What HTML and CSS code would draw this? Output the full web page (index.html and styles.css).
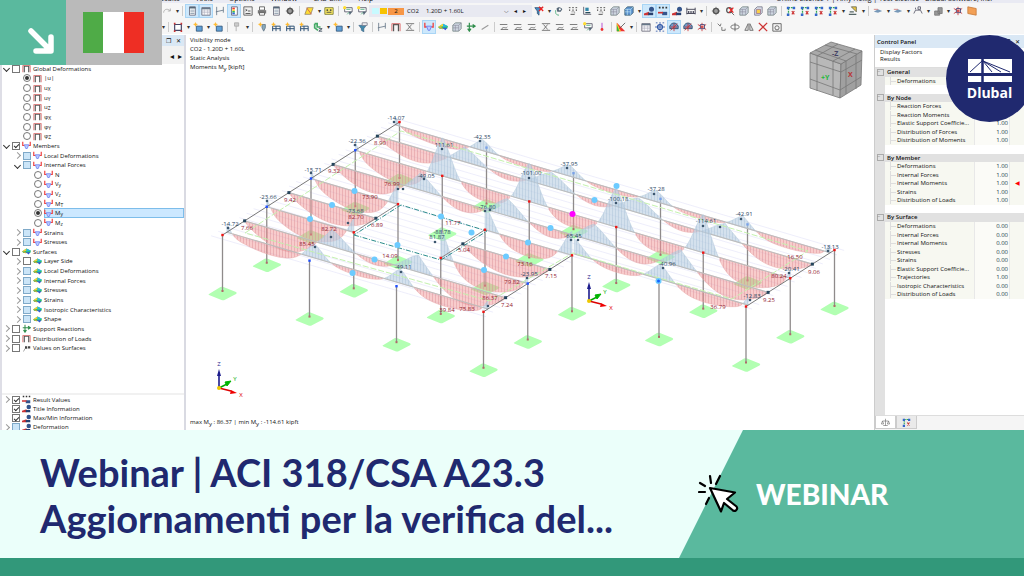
FILE: index.html
```html
<!DOCTYPE html>
<html lang="it">
<head>
<meta charset="utf-8">
<title>Webinar | ACI 318/CSA A23.3</title>
<link rel="stylesheet" href="styles.css">
</head>
<body>
<svg class="sprite" aria-hidden="true">
  <symbol id="redo" viewBox="0 0 12 12"><path d="M2 8C2 3 8 3 10 6M10 3v3H7" fill="none" stroke="#aaa"/></symbol>
  <symbol id="panel" viewBox="0 0 12 12"><path d="M3 1h7v10H3z" fill="#fff" stroke="#667"/><path d="M3 1h7v2H3z" fill="#567"/><path d="M4 5h5M4 7h5M4 9h5" stroke="#89a"/></symbol>
  <symbol id="grid" viewBox="0 0 12 12"><path d="M1 2h10v9H1z" fill="#fff" stroke="#667"/><path d="M1 2h10v2H1z" fill="#678"/><path d="M1 6h10M1 8h10M4 4v7M8 4v7" stroke="#aab" stroke-width=".7"/></symbol>
  <symbol id="section" viewBox="0 0 12 12"><path d="M2 1v10M10 1v7M1 7l9-2" fill="none" stroke="#678"/></symbol>
  <symbol id="rainbow" viewBox="0 0 12 12"><path d="M3 1h7v10H3z" fill="#fff" stroke="#667"/><path d="M4 2h3v2H4z" fill="#e33"/><path d="M4 4h3v2H4z" fill="#fc3"/><path d="M4 6h3v2H4z" fill="#3b5"/><path d="M4 8h3v2H4z" fill="#36d"/></symbol>
  <symbol id="console" viewBox="0 0 12 12"><path d="M1 1h10v10H1z" fill="#eee" stroke="#555"/><path d="M3 4l2 1-2 1M6 6h3M3 9h6" fill="none" stroke="#444"/></symbol>
  <symbol id="printer" viewBox="0 0 12 12"><path d="M3 1h6v4H3z" fill="#fff" stroke="#555"/><path d="M1 5h10v4H1z" fill="#777"/><path d="M3 8h6v3H3z" fill="#fff" stroke="#555"/></symbol>
  <symbol id="gear" viewBox="0 0 12 12"><circle cx="6" cy="6" r="3" fill="none" stroke="#555" stroke-width="2"/><path d="M6 1v10M1 6h10" stroke="#555" stroke-width=".8"/></symbol>
  <symbol id="load" viewBox="0 0 12 12"><path d="M4 2h7L8 10H1z" fill="#fd3" stroke="#986"/><path d="M3 2l6 8" stroke="#c55"/></symbol>
  <symbol id="calc" viewBox="0 0 12 12"><path d="M1 2h10v8H1z" fill="#fe6" stroke="#773"/><path d="M3 4h2v2H3zM7 4h2v2H7zM3 7h6v1H3z" fill="#554"/></symbol>
  <symbol id="note" viewBox="0 0 12 12"><path d="M2 2h9v5H2z" fill="#fff" stroke="#556"/><path d="M4 4h5M5 10l3-3" stroke="#4a7"/><circle cx="2" cy="2" r="2" fill="#fd3"/><path d="M7 7l4 0-3 4z" fill="#567"/></symbol>
  <symbol id="filterx" viewBox="0 0 12 12"><path d="M1 2h8L6 6v5L4 9V6z" fill="#478dc8" stroke="#357"/><path d="M6 1l5 5M11 1L6 6" stroke="#e22" stroke-width="1.6"/></symbol>
  <symbol id="filter" viewBox="0 0 12 12"><path d="M1 4h9L7 8v4L4 10V8z" fill="#48a" stroke="#357" stroke-width=".6"/><path d="M5 1h6v3H5z" fill="#fff" stroke="#778"/></symbol>
  <symbol id="eye" viewBox="0 0 12 12"><path d="M3 3c3-3 6-1 7 1L8 7H4z" fill="#567"/><circle cx="7" cy="4" r="1.3" fill="#fff"/><path d="M2 5v3c0 2 2 3 4 3" fill="none" stroke="#4a7"/></symbol>
  <symbol id="values" viewBox="0 0 12 12"><path d="M1 2h2M5 2h2M9 2h2M2 4v2M6 4v2M10 4v2M3 10h5" stroke="#555" stroke-width="1.2"/><path d="M4 7h4v2" fill="none" stroke="#999"/></symbol>
  <symbol id="flagvalues" viewBox="0 0 12 12"><path d="M2 10l2-4h3" fill="none" stroke="#888"/><path d="M4 3h3v3H4zM8 3h3v3H8z" fill="#444"/></symbol>
  <symbol id="support" viewBox="0 0 12 12"><path d="M2 1v9h9" fill="none" stroke="#556"/><path d="M4 2h4v4H4z" fill="#38a"/><path d="M4 8h6" stroke="#245" stroke-width="1.5"/></symbol>
  <symbol id="cube" viewBox="0 0 12 12"><path d="M1 4l3-3h7v7l-3 3H1z" fill="#cdd5e0" stroke="#788"/><path d="M1 4h7v7M8 4l3-3M4 4v7M1 7h7" fill="none" stroke="#889" stroke-width=".7"/></symbol>
  <symbol id="bluecube" viewBox="0 0 12 12"><path d="M1 4l3-3h7v7l-3 3H1z" fill="#5b91cf" stroke="#467"/><path d="M1 4h7v7M8 4l3-3M4 4v7M1 7h7" fill="none" stroke="#dff" stroke-width=".6"/></symbol>
  <symbol id="yellowcube" viewBox="0 0 12 12"><path d="M2 4l3-3h6v7l-3 3H2z" fill="#dde3f0" stroke="#778"/><path d="M4 4h5v5H4z" fill="#f8cf4a" stroke="#979"/></symbol>
  <symbol id="result" viewBox="0 0 12 12"><path d="M0 9l6-2v4H0z" fill="#c33"/><path d="M5 8h6v3H5z" fill="#27406f"/><circle cx="9" cy="4" r="3" fill="#35558c"/></symbol>
  <symbol id="resultv" viewBox="0 0 12 12"><path d="M1 2h2M5 2h2M9 2h2" stroke="#333" stroke-width="2"/><path d="M5 7h6v4H5z" fill="#35558c"/><path d="M0 8h6" stroke="#c33" stroke-width="2"/></symbol>
  <symbol id="ruler" viewBox="0 0 12 12"><path d="M1 2v8M11 2v8M1 4h10M1 9h10M3 6v3M5 6v3M7 6v3M9 6v3" stroke="#445" stroke-width="1.1"/></symbol>
  <symbol id="zoomx" viewBox="0 0 12 12"><circle cx="5" cy="5" r="3" fill="none" stroke="#555" stroke-width="1.5"/><path d="M7 7l4 4" stroke="#555"/><path d="M5 2l5 6M10 2L5 8" stroke="#e22" stroke-width="1.5"/></symbol>
  <symbol id="axis" viewBox="0 0 12 12"><path d="M3 11V2h7" fill="none" stroke="#3a5" stroke-width="1.5" stroke-dasharray="2 1"/><path d="M1 1h3v3H1zM1 9h3v3H1zM8 1h3v3H8z" fill="#36c"/><path d="M7 6l3 4M10 6l-3 4" stroke="#c33" stroke-width="1.4"/></symbol>
  <symbol id="plane" viewBox="0 0 12 12"><path d="M4 1h6v6z" fill="#edc93f" stroke="#665"/><path d="M1 10h9M2 7h5" stroke="#566" stroke-width="1.5"/></symbol>
  <symbol id="beam" viewBox="0 0 12 12"><path d="M1 7l5-3 5 2-5 2z" fill="#7798b8"/><path d="M1 4h5" stroke="#c77"/></symbol>
  <symbol id="dim" viewBox="0 0 12 12"><path d="M1 9l2-4h6l2 4M3 2v2M6 1v3h3V1z" fill="none" stroke="#556"/></symbol>
  <symbol id="blocks" viewBox="0 0 12 12"><path d="M2 6h6v5H2zM6 2h5v7H6z" fill="#999" stroke="#777"/></symbol>
  <symbol id="burst" viewBox="0 0 12 12"><path d="M1 3l10 6M11 3L1 9M6 1v10" stroke="#c33"/><path d="M4 3h5v5H4z" fill="none" stroke="#447"/></symbol>
  <symbol id="orange" viewBox="0 0 12 12"><path d="M1 1l10 2v8L1 9z" fill="#f3a056" stroke="#c97c3c"/></symbol>
  <symbol id="rect" viewBox="0 0 12 12"><path d="M2 3h8v7H2z" fill="#fff" stroke="#446" stroke-width="1.4"/><path d="M1 2h2M9 2h2M1 11h2M9 11h2" stroke="#c33" stroke-width="2"/></symbol>
  <symbol id="star" viewBox="0 0 12 12"><path d="M4 5h7v6H4z" fill="#5fa0d8" stroke="#357"/><path d="M3 0l1 2 2 .5L4 4 3 6 2 4 0 2.5 2 2z" fill="#fb3"/></symbol>
  <symbol id="axisstar" viewBox="0 0 12 12"><path d="M2 11V5h9v6M2 8h9M6 5v6" fill="none" stroke="#357" stroke-width="1.2"/><path d="M3 0l1 2 2 .5L4 4 3 6 2 4 0 2.5 2 2z" fill="#fb3"/></symbol>
  <symbol id="lampstar" viewBox="0 0 12 12"><path d="M6 3h4v4L8 11 6 7z" fill="#8ab" stroke="#678"/><path d="M4 0l1 2 2 .5L5 4 4 6 3 4 1 2.500 3 2z" fill="#fb3"/></symbol>
  <symbol id="pin" viewBox="0 0 12 12"><path d="M3 1h5v4H3zM5 5v6" fill="#ccc" stroke="#aaa"/></symbol>
  <symbol id="green" viewBox="0 0 12 12"><path d="M2 2h3v4h4M2 2v5l4 3" fill="none" stroke="#4a6" stroke-width="2"/><path d="M7 8h4l-4 3h4" fill="none" stroke="#345"/></symbol>
  <symbol id="frame" viewBox="0 0 12 12"><path d="M3 11V3h6v8" fill="none" stroke="#555" stroke-width="1.6"/><path d="M1 11V2h10v9" fill="none" stroke="#d66"/></symbol>
  <symbol id="moment" viewBox="0 0 12 12"><path d="M1 1v5h2M11 1v5H9" fill="none" stroke="#e44" stroke-width="1.6"/><path d="M3 5h6l-2 5H5z" fill="#bcf" stroke="#67e"/></symbol>
  <symbol id="surface" viewBox="0 0 12 12"><path d="M0 6l6-4 6 3-1 3H2z" fill="#2fc36b"/><path d="M0 6l6-4v3z" fill="#ffd52e"/><path d="M6 2l6 3-6 1z" fill="#29b6e8"/><path d="M5 7h6l-2 3z" fill="#3858d8"/><path d="M0 6h4l2 3z" fill="#e9a42e"/></symbol>
  <symbol id="react" viewBox="0 0 12 12"><path d="M4 1v10M2 8l2 3 2-3M1 5h10M8 3l3 2-3 2" fill="none" stroke="#2f8d4b" stroke-width="1.4"/></symbol>
  <symbol id="line" viewBox="0 0 12 12"><path d="M2 9l8-5" stroke="#999" stroke-width="1.3"/></symbol>
  <symbol id="diag" viewBox="0 0 12 12"><path d="M1 3h9M2 9h9M3 9c2-5 5 0 7-3" fill="none" stroke="#666"/></symbol>
  <symbol id="diagx" viewBox="0 0 12 12"><path d="M1 2h10M1 10h10M3 3l5 6M8 3L3 9" stroke="#666" fill="none"/></symbol>
  <symbol id="drop" viewBox="0 0 12 12"><path d="M6 1v8" stroke="#a3c"/><circle cx="6" cy="9" r="1.7" fill="#e33"/></symbol>
  <symbol id="chart" viewBox="0 0 12 12"><path d="M1 1v10h10z" fill="#e33"/><path d="M1 1l5 10H1z" fill="#fc2"/><path d="M1 3l3 8H1z" fill="#3b4"/><path d="M4 8l7-7" stroke="#555"/></symbol>
  <symbol id="target" viewBox="0 0 12 12"><circle cx="6" cy="6" r="3" fill="none" stroke="#335aa8" stroke-width="1.5"/><path d="M1 1h2M9 1h2M1 11h2M9 11h2M6 0v12M0 6h12" stroke="#335aa8"/></symbol>
  <symbol id="globe" viewBox="0 0 12 12"><path d="M1 5c2-5 8-5 10 0v3H1z" fill="#6f9dcc" stroke="#246"/><path d="M2 10l8-8M6 2v9M2 6h8" stroke="#c33"/></symbol>
  <symbol id="path" viewBox="0 0 12 12"><path d="M2 2l3 3 1-3M7 6v4h4V8" fill="none" stroke="#666"/></symbol>
  <symbol id="rotate" viewBox="0 0 12 12"><ellipse cx="6" cy="6" rx="5" ry="2.5" fill="none" stroke="#666"/><path d="M6 1v10" stroke="#555"/></symbol>
  <symbol id="mirror" viewBox="0 0 12 12"><path d="M5 2L1 10h4zM7 2l4 8H7z" fill="#ddd" stroke="#666"/></symbol>
  <symbol id="cross" viewBox="0 0 12 12"><path d="M1 1l10 10M11 1L1 11" stroke="#c33" stroke-width="1.5"/></symbol>
  <symbol id="camera" viewBox="0 0 12 12"><path d="M1 2h10v9H1z" fill="none" stroke="#555"/><circle cx="6" cy="7" r="2.5" fill="none" stroke="#555"/></symbol>
  <symbol id="scale" viewBox="0 0 12 12"><path d="M6 1v9M3 10h6M2 4h8M2 4L.5 8h3zM10 4L8.5 8h3z" fill="none" stroke="#666" stroke-width=".8"/></symbol>
  <symbol id="pad" viewBox="-15 -6 30 15"><path d="M-13.5 2-2-5Q-1-5.5 1-5L13.5 0Q15 1 13.5 2L2 8Q1 8.5-1 8L-13.5 3Q-14.5 2-13.5 2Z" fill="#b2ffb2"/></symbol>
  <pattern id="hatch-red" width="3" height="3" patternUnits="userSpaceOnUse"><rect width="3" height="3" fill="#f08f8f" fill-opacity=".46"/><path d="M.5 0v3" stroke="#d98a90" stroke-opacity=".6" stroke-width=".7"/></pattern>
  <pattern id="hatch-blue" width="3" height="3" patternUnits="userSpaceOnUse"><rect width="3" height="3" fill="#b9cfe2" fill-opacity=".62"/><path d="M.5 0v3" stroke="#9db9d0" stroke-opacity=".5" stroke-width=".7"/></pattern>
</svg>

<main class="app">
  <header class="chrome">
    <nav class="menu"><span>Results</span><span>Tools</span><span>Options</span><span>Window</span><span>CAD-BIM</span><span>Help</span><span class="license">Online License 1 | Amy Heilig | Test-License - Dlubal Software, Inc.</span></nav>
    <div class="toolbar" id="toolbar-main"></div>
    <div class="toolbar" id="toolbar-view"></div>
  </header>
  <div class="work">
    <aside class="navigator" aria-label="Navigator">
      <div class="dock-title"><button aria-label="Float">❐</button><button aria-label="Close">✕</button></div>
      <div class="dock-tabs"><button aria-label="Previous">◂</button><button aria-label="Next">▸</button></div>
      <div class="tree" id="tree"></div>
      <div class="tree tree-options" id="tree-options"></div>
    </aside>

    <section class="viewport">
      <p class="info">Visibility mode<br>CO2 - 1.20D + 1.60L<br>Static Analysis<br>Moments M<sub>y</sub> [kipft]</p>
      <svg class="model" viewBox="186 35 688 395" preserveAspectRatio="xMinYMin meet" role="img" aria-label="Bending moments of the slab beams">
        <g id="structure"></g>
        <g id="labels"></g>
        <g class="view-cube" stroke="#777" stroke-width=".8" stroke-linejoin="round">
          <path d="M810 88V53l31 11-1 34z" fill="#b8b8b8"/><path d="M841 64l21-13-1 34-21 13z" fill="#a0a0a0"/><path d="M810 53l21-11 31 9-21 13z" fill="#a9a9a9"/>
          <path d="M817 56v35M833 61v34M810 62l31 10M810 79l30 11M846 61v33M856 55v34M841 72l21-12M840 90l21-13M815 50l31 11M825 45l32 9M817 56l21-12M833 61l22-12" fill="none"/>
          <g stroke="none" class="cube-text"><text x="821" y="80" fill="#22b83a">+Y</text><text x="848" y="77" fill="#b83333">X</text><text x="832" y="56" fill="#446">-Z</text></g>
        </g>
        <g id="triad">
          <path d="M219 388V375" stroke="#1c1c8c" stroke-width="1.6"/><path d="M219 369l-2 7h4z" fill="#1c1c8c"/>
          <path d="M219 388l8-4" stroke="#0a0" stroke-width="1.4"/><path d="M231 381l-6 1 2 4z" fill="#00b400" stroke="#00b400"/>
          <path d="M219 388l12 3" stroke="#d00" stroke-width="1.4"/><path d="M237 393l-6-3-1 4z" fill="#e00"/>
          <circle cx="219" cy="388" r="2" fill="#eec800"/>
          <text x="219" y="366" fill="#1c1c8c">Z</text><text x="235" y="381" fill="#0a0">Y</text><text x="241" y="397" fill="#d00">X</text>
        </g>
        <use href="#triad" x="370" y="-87"/>
      </svg>
      <p class="extremes">max M<sub>y</sub> : 86.37 | min M<sub>y</sub> : -114.61 kipft</p>
    </section>

    <aside class="control">
      <div class="dock-title"><h2>Control Panel</h2><button aria-label="Float">❐</button><button aria-label="Close">✕</button></div>
      <p class="control-head">Display Factors<br>Results</p>
      <table class="factors"><tbody id="factors"></tbody></table>
      <div class="control-tabs"><button class="active" aria-label="Factors"><svg><use href="#scale"/></svg></button><button aria-label="Filter"><svg><use href="#axis"/></svg></button></div>
    </aside>
  </div>

  <div class="badge">
    <div class="badge-arrow"><svg viewBox="0 0 66 65" aria-hidden="true"><path d="M31 31L50 50M51 37v14H36" fill="none" stroke="#fff" stroke-width="5.5" stroke-linecap="round" stroke-linejoin="round"/></svg></div>
    <div class="badge-flag"><div class="flag" role="img" aria-label="Italia"></div></div>
  </div>
  <div class="logo">
    <svg viewBox="0 0 44 23" aria-hidden="true"><path d="M0 0h44v14H0zM0 17h44v6H0z" fill="#fff"/><path d="M14.500 0v23" stroke="#20296f" stroke-width="2.500"/><path d="M2 13L14 2M15 2l27 11M15 2l18 11M15 2l9 11" stroke="#20296f" fill="none"/></svg>
    <span>Dlubal</span>
  </div>
</main>

<section class="banner">
  <h1>Webinar | ACI 318/CSA A23.3<br>Aggiornamenti per la verifica del...</h1>
  <div class="category">
    <svg viewBox="0 0 42 40" aria-hidden="true"><g stroke="#000" stroke-width="2.2" stroke-linecap="round" stroke-linejoin="round"><path d="M12 2l1 7M22 2l-4 8M2 9l5 3M1 18h6M11 24l-3 6" fill="none"/><path d="M12 14l25 4.500-8 6.500 9.500 7.500c2 3-2 6-4 3.500L26 29l-3 8.500z" fill="#fff"/></g></svg>
    <strong>WEBINAR</strong>
  </div>
</section>
<footer class="strip"></footer>
<script src="app.js"></script>
</body>
</html>
```

FILE: styles.css
```css
* { box-sizing: border-box; }
body {
  margin: 0;
  min-height: 100vh;
  display: flex;
  flex-direction: column;
  font-family: "Open Sans", "Noto Sans", sans-serif;
  font-size: 6px;
  color: #111;
  background: #fff;
}
p, h1, h2 { margin: 0; font-weight: inherit; }
button, input { font: inherit; color: inherit; margin: 0; padding: 0; border: 0; background: none; }
.sprite { position: absolute; width: 0; height: 0; }

.app {
  position: relative;
  flex: 1 0 0;
  min-height: 430px;
  display: flex;
  flex-direction: column;
  overflow: hidden;
}
.chrome { height: 34px; background: #f6f6f6; overflow: hidden; flex: none; }
.menu { display: flex; gap: 16px; height: 3px; padding-left: 156px; background: #e9eaf3; line-height: 3px; font-size: 7px; align-items: flex-end; }
.menu span { height: 6px; white-space: nowrap; }
.menu .license { margin-left: auto; padding-right: 32px; }
.toolbar { display: flex; align-items: center; height: 16px; padding-left: 160px; }
.toolbar + .toolbar { height: 15px; }
.tool { width: 14px; height: 14px; flex: none; display: grid; place-items: center; }
.tool svg { width: 10px; height: 10px; display: block; }
.tool.on { background: #cde8fc; box-shadow: inset 0 0 0 1px #a9d5f5; }
.caret { width: 6px; flex: none; text-align: center; font-size: 6px; color: #333; }
.sep { width: 1px; height: 10px; margin: 0 2px; flex: none; background: #ccc; }
.combo { display: flex; align-items: center; gap: 3px; width: 163px; height: 12px; padding: 0 5px 0 3px; background: #e8e9f1; }
.combo i { width: 7px; height: 6px; background: #c8faff; }
.combo i + i { background: #f7c200; margin-left: -2px; }
.combo b { width: 16px; height: 7px; line-height: 7px; text-align: center; background: #f79646; font-weight: 400; margin-left: -2px; }
.combo span:last-of-type { margin-left: 4px; margin-right: auto; }
.combo button { width: 6px; }

.work { flex: 1; min-height: 0; display: flex; border-top: 1px solid #fff; }
.navigator { width: 186px; flex: none; display: flex; flex-direction: column; border-left: 2px solid #dedee6; border-right: 2px solid #d9dae2; }
.dock-title { display: flex; align-items: center; justify-content: flex-end; gap: 5px; height: 11px; padding-right: 3px; background: #dae8f5; flex: none; }
.dock-tabs { height: 18px; flex: none; display: flex; justify-content: flex-end; align-items: center; gap: 4px; padding-right: 2px; background: #f2f2f2; font-size: 8px; }
.tree { height: 289px; flex: none; display: grid; grid-auto-rows: minmax(0, 1fr); }
.tree-options { margin-top: 40px; height: 39px; border-top: 2px solid #f1f1f1; }
.row { display: flex; align-items: center; gap: 2px; line-height: 8px; white-space: nowrap; }
.row.l1 { padding-left: 11px; }
.row.l2 { padding-left: 22px; }
.row .twist { width: 8px; height: 8px; flex: none; display: grid; place-items: center; }
.twist::before { content: ""; width: 4px; height: 4px; border: solid #999; border-width: 1px 1px 0 0; transform: rotate(45deg); }
.twist.open::before { border-color: #333; transform: rotate(135deg); }
.twist.none::before { display: none; }
.row input { appearance: none; width: 8px; height: 8px; flex: none; border: 1px solid #777; background: #fff; display: grid; place-items: center; }
.row input.part { background: #cbe5f8; border-color: #7fa9c8; }
.row input[type="radio"] { border-radius: 50%; }
.row input[type="radio"]:checked::before { content: ""; width: 4px; height: 4px; border-radius: 50%; background: #333; }
.row input[type="checkbox"]:checked::before { content: ""; width: 4px; height: 2px; border: solid #333; border-width: 0 0 1px 1px; transform: rotate(-45deg); }
.row label { flex: 1; display: flex; align-items: center; gap: 2px; height: 100%; }
.row label svg { width: 9px; height: 9px; flex: none; }
.row sub { font-size: 5px; line-height: 5px; vertical-align: -1px; }
.row.selected label { background: #cce8ff; box-shadow: inset 0 0 0 1px #7dbdea; }

.viewport { position: relative; flex: 1; min-width: 0; overflow: hidden; }
.info { position: absolute; left: 4px; top: 1px; line-height: 9px; z-index: 1; }
.extremes { position: absolute; left: 4px; top: 382px; line-height: 10px; }
.info sub, .extremes sub { line-height: 0; font-size: 6px; }
.model { position: absolute; left: 0; top: 0; width: 688px; height: 395px; }
.model text { font-size: 6px; text-anchor: middle; }
.neg { fill: #2b4662; }
.pos { fill: #932230; }
.model .cube-text text { font-size: 7px; font-weight: 700; text-anchor: start; }

.control { width: 150px; flex: none; display: flex; flex-direction: column; border-left: 1px solid #ccc; }
.control .dock-title { height: 13px; padding: 0 4px 0 2px; }
.control h2 { font-size: 6px; font-weight: 600; margin-right: auto; }
.control-head { padding: 1px 0 0 5px; height: 20px; line-height: 7px; flex: none; border-bottom: 1px solid #ddd; }
.factors { display: block; background: linear-gradient(90deg, #e1e1e1 10px, #fff 10px); flex: 1; }
.factors tbody { display: grid; grid-auto-rows: minmax(0, 1fr); height: 231px; }
.factors tr { display: grid; grid-template-columns: 10px minmax(0, 1fr) 36px 14px; line-height: 8px; }
.factors td, .factors th { padding: 0; font-weight: 400; text-align: left; white-space: nowrap; }
.factors .item th { padding-left: 12px; background: #f7f8f1; }
.factors .item th::before { content: ""; display: inline-block; width: 6px; height: 8px; margin: 0 1px 0 -7px; vertical-align: top; background: linear-gradient(#ddd, #ddd) 0 4px / 6px 1px no-repeat, linear-gradient(#ddd, #ddd) 0 0 / 1px 8px no-repeat; }
.factors .value { text-align: right; padding-right: 1px; border-left: 1px solid #e8e8e8; border-right: 1px solid #e8e8e8; background: #fbfbf7; color: #223b4a; }
.factors .flag-cell { background: #f7f8f1; color: #f00; text-align: center; }
.factors .group { background: #e1e1e1; }
.factors .group th { font-weight: 600; padding-left: 2px; }
.factors .group td { display: grid; place-items: center; }
.factors .group td::before { content: "−"; width: 5px; height: 5px; line-height: 3px; font-size: 5px; border: 1px solid #aaa; color: #777; }
.control-tabs { height: 15px; flex: none; display: flex; background: #f5f5f5; border-top: 1px solid #ddd; }
.control-tabs button { width: 21px; height: 13px; display: grid; place-items: center; background: #eaeaea; border: 1px solid #ccc; border-top: 0; }
.control-tabs button.active { background: #fff; }
.control-tabs svg { width: 9px; height: 9px; }

.badge { position: absolute; left: 0; top: 0; display: flex; height: 65px; }
.badge-arrow { width: 66px; background: #5ab99e; }
.badge-arrow svg { display: block; width: 66px; height: 65px; }
.badge-flag { width: 96px; background: #bababa; padding: 12px 18px 12px 17px; }
.flag { height: 41px; background: linear-gradient(90deg, #4fab47 0 33%, #fff 33% 67%, #ee2e24 67%); }
.logo { position: absolute; right: -9px; top: 35px; width: 87px; height: 87px; border-radius: 50%; background: #20296f; color: #fff; display: flex; flex-direction: column; align-items: center; padding-top: 24px; font-size: 14px; line-height: 22px; font-weight: 700; }
.logo svg { width: 44px; height: 23px; flex: none; }

.banner { display: flex; align-items: stretch; background: #ebfffa; font-family: Lato, "Open Sans", sans-serif; }
.banner h1 { flex: 1; padding: 19px 0 17px 40px; font-size: 38px; line-height: 46px; font-weight: 700; color: #20296f; white-space: nowrap; }
.category { position: relative; width: 345px; flex: none; display: flex; align-items: center; gap: 16px; padding: 0 0 1px 19px; color: #fff; }
.category::before { content: ""; position: absolute; inset: 0; background: #5ab99e; clip-path: polygon(64px 0, 100% 0, 100% 100%, 0 100%); }
.category svg { position: relative; width: 42px; height: 40px; }
.category strong { position: relative; font-size: 28px; font-weight: 900; }
.strip { height: 18px; background: #32987a; }
```

FILE: app.js
```js
const byId = id => document.getElementById(id);

/* Toolbars: "v" is a drop-down caret, "|" a separator, "*" marks an active tool. */
const combo = '<div class="combo"><i></i><i></i><b>2</b><span>CO2</span><span>1.20D + 1.60L</span><button aria-label="Open list">⌵</button><button aria-label="Previous case">◂</button><button aria-label="Next case">▸</button></div>';
const tools = {
  'toolbar-main': 'redo v | *panel *grid section *rainbow console printer panel gear | load v calc | note note combo filterx v eye values support values cube bluecube v *result *resultv result ruler v | gear zoomx cube yellowcube cube | axis axis axis axis v plane v | beam v beam v dim v blocks v burst orange',
  'toolbar-view': 'v | rect v star v star | pin v | lampstar axisstar axisstar axisstar green v star v | filter | section frame diagx | *moment surface cube react line | diag diag diag diagx diag diag note drop | chart v | grid target *globe globe burst | path rotate mirror cross camera'
};
for (const [id, list] of Object.entries(tools)) {
  byId(id).innerHTML = list.split(' ').map(t => {
    if (t === 'v') return '<span class="caret">▾</span>';
    if (t === '|') return '<span class="sep"></span>';
    if (t === 'combo') return combo;
    const name = t.replace('*', '');
    return `<button class="tool${t[0] === '*' ? ' on' : ''}" aria-label="${name}"><svg><use href="#${name}"/></svg></button>`;
  }).join('');
}

/* Navigator rows: level, twist, control, icon, label. */
const surfaceRows = ['Local Deformations', 'Internal Forces', 'Stresses', 'Strains', 'Isotropic Characteristics', 'Shape'];
const rows = [
  [0, 'open', 'off', 'frame', 'Global Deformations'],
  ...['|u|', 'u<sub>X</sub>', 'u<sub>Y</sub>', 'u<sub>Z</sub>', 'φ<sub>X</sub>', 'φ<sub>Y</sub>', 'φ<sub>Z</sub>'].map((n, i) => [1, 'none', i ? 'radio' : 'radio-on', 'frame', n, 'deformation']),
  [0, 'open', 'on', 'moment', 'Members'],
  [1, 'shut', 'part', 'moment', 'Local Deformations'],
  [1, 'open', 'part', 'moment', 'Internal Forces'],
  ...['N', 'V<sub>y</sub>', 'V<sub>z</sub>', 'M<sub>T</sub>', 'M<sub>y</sub>', 'M<sub>z</sub>'].map((n, i) => [2, 'none', i === 4 ? 'radio-on' : 'radio', 'moment', n, 'force']),
  [1, 'shut', 'part', 'moment', 'Strains'],
  [1, 'shut', 'part', 'moment', 'Stresses'],
  [0, 'open', 'off', 'surface', 'Surfaces'],
  [1, 'shut', 'off', 'surface', 'Layer Side'],
  ...surfaceRows.map(n => [1, 'shut', 'part', 'surface', n]),
  [0, 'shut', 'off', 'react', 'Support Reactions'],
  [0, 'shut', 'off', 'frame', 'Distribution of Loads'],
  [0, 'shut', 'off', 'flagvalues', 'Values on Surfaces']
];
const options = [
  [0, 'shut', 'on', 'resultv', 'Result Values'],
  [0, 'none', 'on', 'result', 'Title Information'],
  [0, 'none', 'on', 'result', 'Max/Min Information'],
  [0, 'shut', 'part', 'result', 'Deformation']
];
const renderRows = (list, prefix) => list.map(([level, twist, state, icon, label, group], i) => {
  const radio = state.startsWith('radio');
  const checked = state === 'on' || state === 'radio-on' ? ' checked' : '';
  const selected = group === 'force' && checked ? ' selected' : '';
  return `<div class="row l${level}${selected}"><span class="twist ${twist}"></span><input id="${prefix}${i}" type="${radio ? 'radio' : 'checkbox'}" class="${state}"${group ? ` name="${group}"` : ''}${checked}><label for="${prefix}${i}"><svg><use href="#${icon}"/></svg><span>${label}</span></label></div>`;
}).join('');
byId('tree').innerHTML = renderRows(rows, 'nav');
byId('tree-options').innerHTML = renderRows(options, 'opt');

/* Control panel factors. */
const groups = [
  ['General', '', ['Deformations']],
  ['By Node', '1.00', ['Reaction Forces', 'Reaction Moments', 'Elastic Support Coefficie...', 'Distribution of Forces', 'Distribution of Moments']],
  ['By Member', '1.00', ['Deformations', 'Internal Forces', 'Internal Moments', 'Strains', 'Distribution of Loads']],
  ['By Surface', '0.00', ['Deformations', 'Internal Forces', 'Internal Moments', 'Stresses', 'Strains', 'Elastic Support Coefficie...', 'Trajectories', 'Isotropic Characteristics', 'Distribution of Loads']]
];
byId('factors').innerHTML = groups.map(([title, value, items]) =>
  `<tr class="group"><td></td><th>${title}</th></tr>` + items.map(n =>
    `<tr class="item"><td></td><th>${n}</th><td class="value">${n === 'Trajectories' ? '1.00' : value}</td><td class="flag-cell">${title === 'By Member' && n === 'Internal Moments' ? '◀' : ''}</td></tr>`).join('')
).join('<tr><td></td></tr>');

/* Structure: bay i along X, axis j along Y, projected to the view. */
const P = (i, j) => [222.5 + 87 * i + 44.25 * j, 235 + 25.6 * i - 28.25 * j];
const at = (i, j) => P(i, j).map(v => v.toFixed(1)).join(' ');
const line = (a, b, cls, w = 1, extra = '') => `<path d="M${a}L${b}" fill="none" stroke="${cls}" stroke-width="${w}" ${extra}/>`;
const baysAt = j => (j < 2 ? 3 : 5);
let out = '';

for (let j = 0; j <= 4.2; j += 0.16) out += line(at(-0.08, j - 0.1), at(baysAt(j) + 0.08, j - 0.1), '#e2e2f8', 0.6);

const columns = [];
for (let j = 4; j >= 0; j--) for (let i = 0; i <= baysAt(j); i++) columns.push([i, j]);
columns.forEach(([i, j]) => {
  const [x, y] = P(i, j);
  out += `<use href="#pad" x="${x - 15}" y="${y + 51}" width="30" height="15"/>`;
});
columns.forEach(([i, j]) => {
  const [x, y] = P(i, j);
  out += line(`${x} ${y}`, `${x} ${y + 56}`, '#8f8b8b', 1.3) + `<rect x="${x - 1}" y="${y + 55}" width="2" height="2" fill="#b06a6a"/>`;
});

/* Beams: axis, first bay, last bay, end sag, inner sag, support peak, peak width. */
const beams = [
  [3.9, 0, 5, 8, 4, 11, 0.15], [3.5, 0, 5, 15, 8, 15, 0.3], [3, 0, 5, 20, 13, 38, 0.16], [2.5, 0, 5, 18, 12, 17, 0.3],
  [2, 0, 1, 19, 9, 20, 0.13], [2, 2, 3, 18, 14, 24, 0.14], [2.05, 3, 5, 10, 6, 15, 0.17],
  [1.5, 0, 1, 18, 10, 0, 0.2], [1.5, 2, 3, 18, 14, 0, 0.2], [1, 0, 1, 20, 12, 14, 0.1], [1, 2, 3, 19, 14, 30, 0.14],
  [0.5, 0, 3, 19, 8, 17, 0.28], [0.1, 0, 3, 10, 5, 14, 0.15]
];
beams.forEach(([j, from, to, endSag, sag, peak, width]) => {
  const runs = [];
  for (let n = 0; n <= (to - from) * 58; n++) {
    const s = from + n / 58;
    const bay = Math.min(Math.floor(s), to - 1);
    const outer = bay === 0 || bay === baysAt(j) - 1;
    let m = (outer ? endSag : sag) * Math.pow(Math.max(0, Math.sin(Math.PI * (s - bay))), outer ? 0.75 : 1);
    for (let k = 0; k <= baysAt(j); k++) {
      const edge = k === 0 || k === baysAt(j);
      const h = edge ? (j % 1 === 0.5 ? 0 : 8) : peak;
      m -= h * Math.exp(-Math.pow(Math.abs(s - k) / (edge ? 0.06 : width), 1.7));
    }
    const sign = m >= 0;
    if (!runs.length || runs[runs.length - 1].sign !== sign) runs.push({ sign, pts: [] });
    runs[runs.length - 1].pts.push([s, m]);
  }
  runs.forEach(({ sign, pts }) => {
    const axis = pts.map(([s]) => at(s, j));
    const curve = pts.map(([s, m]) => { const [x, y] = P(s, j); return `${x.toFixed(1)} ${(y + m).toFixed(1)}`; }).reverse();
    out += `<path d="M${axis[0]}L${axis[axis.length - 1]}L${curve.join('L')}Z" fill="url(#hatch-${sign ? 'red' : 'blue'})" stroke="${sign ? '#e9a9a9' : '#b3c8da'}" stroke-width=".5"/>`;
  });
  out += line(at(from, j), at(to, j), '#bdbdbd', 1.1);
});

out += line(at(0, 0), at(0, 4), '#777') + line(at(3, 0), at(3, 2), '#777') + line(at(5, 2), at(5, 4), '#777');
out += line(at(1, 1), at(1, 2), '#888') + line(at(2, 1), at(2, 2), '#888');
out += '<path d="M354 235L441 260L487 231L401 205Z" fill="none" stroke="#2b8c8c" stroke-dasharray="5 1.5 1 1.5"/>';
out += '<path d="M245 233L401 131L808 251L732 299L573 253L490 301Z" fill="none" stroke="#c4f2ae" stroke-dasharray="6 2"/>';

const blueTops = ['0,1', '0,2', '0,3', '1,0', '2,0', '3,1', '4,2', '1,4', '2,4', '3,4', '4,4'];
columns.forEach(([i, j]) => {
  const [x, y] = P(i, j);
  const blue = blueTops.includes(`${i},${j}`);
  out += `<rect x="${x - 1.2}" y="${y - 1.2}" width="2.4" height="2.4" fill="${blue ? (j === 4 ? '#7aa2e8' : '#1f4fff') : '#f01414'}"/>`;
});
[[0, 0.5], [0, 1.5], [0, 2.5], [0, 3.5], [3, 0.5], [3, 1.5], [5, 2.5], [5, 3.5], [1, 1.5], [2, 1.5]].forEach(([i, j]) => {
  const [x, y] = P(i, j);
  out += `<rect x="${x - 1.5}" y="${y - 1.5}" width="3" height="3" fill="#24445c"/>`;
});
[[394, 122], [355, 145], [311, 173], [267, 201], [228, 228], [442, 149], [480, 141], [529, 178], [567, 168], [616, 203], [654, 194], [703, 226], [741, 219], [720, 227], [663, 268], [315, 247], [331, 237], [401, 272], [348, 223], [398, 189], [403, 189], [435, 242], [485, 211], [490, 210], [571, 240], [578, 240], [424, 179], [828, 251], [789, 273], [750, 300], [488, 306], [527, 278]].forEach(([x, y]) => {
  out += `<circle cx="${x}" cy="${y}" r="1.3" fill="#3c566e"/>`;
});
[[354.5, 191], [332, 205], [310, 219], [397.5, 245], [374.5, 259.5], [616.5, 186], [594.5, 200], [550.5, 228], [528, 242.5], [506, 256.5], [471.5, 232.5], [441, 216.5], [484, 270], [352.5, 273]].forEach(([x, y]) => {
  out += `<circle cx="${x}" cy="${y}" r="3" fill="#6ccbff"/>`;
});
out += '<circle cx="572.5" cy="214" r="3" fill="#f0f"/><circle cx="658.5" cy="281" r="3" fill="#6ccbff"/><circle cx="658.5" cy="281" r="1.5" fill="#1664ff"/>';
byId('structure').innerHTML = out;

const neg = [['-14.07', 396, 120], ['-22.36', 357, 143], ['-15.71', 313, 172], ['-23.66', 268, 199], ['-14.72', 230, 226], ['-73.68', 355, 213], ['-49.11', 403, 269], ['111.61', 444, 147], ['-42.35', 482, 139], ['-37.95', 569, 166], ['-101.00', 531, 175], ['-49.05', 426, 178], ['-100.18', 618, 201], ['-76.80', 487, 209], ['-88.78', 442, 234], ['81.87', 437, 239], ['-65.45', 573, 238], ['-37.28', 656, 191], ['-42.91', 744, 216], ['-114.61', 706, 223], ['-13.13', 830, 249], ['-20.41', 791, 271], ['-12.83', 752, 298], ['-40.96', 667, 266], ['-23.95', 529, 276]];
const pos = [['8.90', 380, 145], ['9.32', 334, 173], ['9.42', 290, 202], ['7.66', 247, 230], ['82.72', 329, 231], ['85.45', 307, 246], ['73.90', 370, 199], ['76.99', 392, 186], ['82.70', 356, 219], ['6.89', 377, 227], ['14.09', 390, 258], ['11.77', 453, 225], ['5.04', 464, 252], ['73.16', 525, 266], ['16.50', 795, 259], ['80.24', 779, 278], ['9.06', 814, 274], ['9.25', 769, 302], ['36.79', 718, 309], ['7.15', 551, 278], ['79.82', 512, 284], ['86.37', 490, 300], ['7.24', 507, 307], ['75.83', 467, 311], ['39.84', 447, 312]];
byId('labels').innerHTML = [[neg, 'neg'], [pos, 'pos']].map(([list, cls]) =>
  list.map(([t, x, y]) => `<text class="${cls}" x="${x}" y="${y}">${t}</text>`).join('')).join('');
```
